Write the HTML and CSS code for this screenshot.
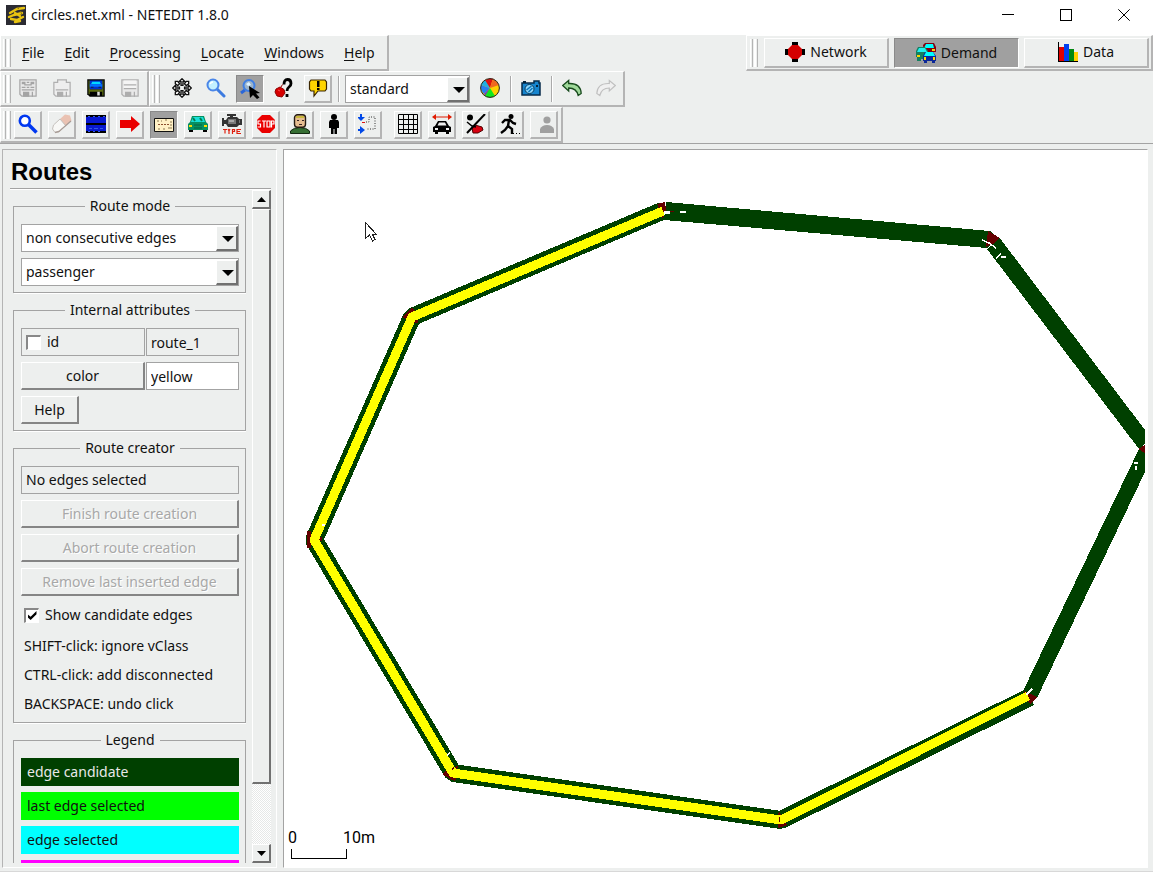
FILE: index.html
```
<!DOCTYPE html>
<html lang="en">
<head>
<meta charset="utf-8">
<title>circles.net.xml - NETEDIT 1.8.0</title>
<link rel="stylesheet" href="styles.css">
</head>
<body>
<header class="titlebar">
  <svg class="icon" viewBox="0 0 20 20"><rect width="20" height="20" fill="#2b2b33"/><path d="M4 8 L11 4 L18 3 M3 12 L8 10 L16 8 M5 14 L11 15 L17 12 M9 17 L14 16 M9 8 L14 11" stroke="#e8c410" stroke-width="2.4" fill="none" stroke-linecap="round"/><path d="M11 2.500 L13 4 M14 6 L16 9" stroke="#8a7208"/></svg>
  <span class="titlebar-text">circles.net.xml - NETEDIT 1.8.0</span>
  <div class="window-controls">
    <button class="window-btn" aria-label="Minimize"><svg viewBox="0 0 12 12"><path d="M0 5.500H12" stroke="#000"/></svg></button>
    <button class="window-btn" aria-label="Maximize"><svg viewBox="0 0 12 12"><rect x=".5" y=".5" width="11" height="11" fill="none" stroke="#000"/></svg></button>
    <button class="window-btn" aria-label="Close"><svg viewBox="0 0 12 12"><path d="M.3 .3L11.700 11.700M11.700 .3L.3 11.700" stroke="#000" fill="none"/></svg></button>
  </div>
</header>

<div class="bars">
  <div class="bar-row bar-row-split">
    <nav class="toolbar menubar">
      <span class="grip"></span>
      <button class="menu"><u>F</u>ile</button>
      <button class="menu"><u>E</u>dit</button>
      <button class="menu"><u>P</u>rocessing</button>
      <button class="menu"><u>L</u>ocate</button>
      <button class="menu"><u>W</u>indows</button>
      <button class="menu"><u>H</u>elp</button>
    </nav>
    <div class="toolbar modes">
      <span class="grip"></span>
      <button class="mode"><svg class="icon" viewBox="0 0 20 20"><path d="M7 0h6v20H7zM0 7h20v6H0z"/><path d="M7 3h6l4 4v6l-4 4H7l-4-4V7z" fill="#d40000"/></svg>Network</button>
      <button class="mode pressed"><svg class="icon" viewBox="0 0 20 20"><path d="M7 2l2-2h9l2 4v5H8z" fill="#800010"/><path d="M10 1h7l1 4H8z" fill="#0ff"/><path d="M2 4h7l3 4v8H5v2H1v-4H0V8z" fill="#148060"/><path d="M3 5h6l2 4H1z" fill="#20f0f0"/><path d="M9 9h8l3 4v5h-1v2h-3v-2h-5v2H8v-2H7v-5z" fill="#0c2898"/><path d="M10 9h7l2 4H8z" fill="#0ff"/><path d="M1 12h3v2H1zM8 14h2v3H8zM17 14h2v3h-2zM16 6h3v2h-3z" fill="#ffd800"/></svg>Demand</button>
      <button class="mode"><svg class="icon" viewBox="0 0 20 20"><path d="M0 0h1v19h19v1H0z"/><path d="M1 5h5v14H1z" fill="#e00000"/><path d="M6 2h5v17H6z" fill="#0040f0"/><path d="M11 7h5v12h-5z" fill="#008810"/><path d="M16 10h4v9h-4z" fill="#ffd000"/></svg>Data</button>
    </div>
  </div>

  <div class="bar-row">
    <div class="toolbar">
      <span class="grip"></span>
      <button class="tool flat" aria-label="Save network" disabled><svg class="icon" viewBox="0 0 16 16"><path d="M1.500 1.500h13v13H3l-1.500-1.500z" fill="#e8e8e8" stroke="#a8a8a8"/><path d="M3 3h3v2H3zM7 3h2v1H7zM10 3h3v2h-3zM5 5h6v1H5zM3 7h3v1H3zM7 7h2v1H7zM10 7h3v1h-3zM3 9h10v1H3zM4 11h5v4H4zM11 11h1v4h-1z" fill="#a4a4a4"/></svg></button>
      <button class="tool flat" aria-label="Save additionals" disabled><svg class="icon" viewBox="0 0 16 16"><path d="M1.500 3.500h3v-2h7v2h3v11H3l-1.500-1.500z" fill="#eee" stroke="#b0b0b0"/><path d="M3 9h10v1H3zM4 11h5v4H4zM11 11h1v4h-1z" fill="#adadad"/></svg></button>
      <button class="tool flat" aria-label="Save demand"><svg class="icon" viewBox="0 0 16 16"><path d="M1 1h14v14H3l-2-2z" fill="#000"/><path d="M2 2h1v11H2zM13 2h1v12h-1zM3 9h10v2H3z" fill="#5c6c10"/><path d="M3 2h10v7H3z" fill="#0030c8"/><path d="M5 3h6l1 2H4z" fill="#00d8ff"/><path d="M3 5h10v2H3z" fill="#0070ff"/><path d="M4 7h2v1H4zM10 7h2v1h-2z" fill="#102060"/><path d="M9 11h2v3H9z" fill="#ddd"/></svg></button>
      <button class="tool flat" aria-label="Save data" disabled><svg class="icon" viewBox="0 0 16 16"><path d="M1.500 1.500h13v13H3l-1.500-1.500z" fill="#e8e8e8" stroke="#b0b0b0"/><path d="M3 2h10v7H3z" fill="#f4f4f4"/><path d="M3 5h10v1H3zM3 8h10v1H3zM4 11h5v4H4zM11 11h1v4h-1z" fill="#adadad"/></svg></button>
    </div>
    <div class="toolbar view">
      <span class="grip"></span>
      <button class="tool flat" aria-label="Recenter view"><svg class="icon" viewBox="0 0 21 21"><g fill="#fff" stroke="#111" stroke-width="1.400"><path d="M10.500 .8l3 3h-2v4h-2v-4h-2zM10.500 20.200l3-3h-2v-4h-2v4h-2zM.8 10.500l3-3v2h4v2h-4v2zM20.200 10.500l-3-3v2h-4v2h4v2z"/><path d="M3.500 6V3.500H6L8 6 6 8zM17.500 6V3.500H15L13 6l2 2zM3.500 15v2.500H6L8 15l-2-2zM17.500 15v2.500H15L13 15l2-2z"/></g></svg></button>
      <button class="tool flat" aria-label="Zoom"><svg class="icon" viewBox="0 0 20 20"><path d="M11 11l7 7" stroke="#3d7be0" stroke-width="3" stroke-linecap="round"/><circle cx="7" cy="7" r="5.500" fill="#c4f0ff" stroke="#4a86e8" stroke-width="2"/><path d="M4 6q1-2 3-2" stroke="#fff" stroke-width="1.500" fill="none"/></svg></button>
      <button class="tool pressed" aria-label="Zoom style"><svg class="icon" viewBox="0 0 20 20"><path d="M5 11l-4 3" stroke="#2a66d8" stroke-width="3"/><circle cx="9" cy="6.500" r="5.500" fill="#9bb4cc" stroke="#3f7fe4" stroke-width="2"/><path d="M6 5l3-2 2 3-3 1z" fill="#dff3ff"/><path d="M9 7l11 7-4 .5 3.500 4-2.500 1.500-4-4-3 3z" fill="#000"/></svg></button>
      <button class="tool flat" aria-label="Object help"><svg class="icon" viewBox="0 0 20 20"><path d="M10 6.500q0-5 3.500-5t3.500 4q0 2-2 3.500t-2 4M13 16v3" stroke="#000" stroke-width="2.800" fill="none"/><path d="M7 9l1.500-2.500M2 11l4-2 4 2.500 1 3.500-3 4-5-1-2-4z" fill="#d80000" stroke="#900000"/><path d="M4 12l2 1" stroke="#ff5050"/></svg></button>
      <button class="tool" aria-label="Messages"><svg class="icon" viewBox="0 0 20 20"><path d="M3 2h14l1.500 2v7L17 13h-7l-4 5v-5H3l-1.500-2V4z" fill="#ffd500" stroke="#3b2600" stroke-width="1.200"/><path d="M9 3h2.500v6H9zM9 10h2.500v2H9z" fill="#000"/></svg></button>
      <span class="divider"></span>
      <span class="combo combo-view"><select aria-label="Coloring scheme"><option>standard</option></select></span>
      <button class="tool flat" aria-label="Edit coloring"><svg class="icon" viewBox="0 0 20 20"><circle cx="10" cy="10" r="9.500" fill="#ffd000"/><path d="M10 10L4 3Q7 .5 10 .5H13z" fill="#e01010"/><path d="M10 10L13 .8Q17 3 19 7z" fill="#f06820"/><path d="M10 10L1 7Q2 4 5 2z" fill="#20b0e0"/><path d="M10 10L1 7Q0 12 4 16z" fill="#2880f0"/><path d="M10 10L4 16l2 2z" fill="#8030c0"/><path d="M10 10L5 18Q10 21 15 18Z" fill="#10e820"/><circle cx="10" cy="10" r="9.400" fill="none" stroke="#222"/></svg></button>
      <span class="divider"></span>
      <button class="tool flat" aria-label="Make snapshot"><svg class="icon" viewBox="0 0 20 20"><path d="M1 5h12V3h5v2h1v12H1z" fill="#1685cf" stroke="#062b4b" stroke-width="1.500"/><path d="M2 3h3v2H2zM15 7h2v2h-2z" fill="#04243c"/><circle cx="8.500" cy="11" r="4.500" fill="#8ed8ff" stroke="#05395c"/><path d="M5.500 12l5-4M7.500 14l4-4" stroke="#0874b8" stroke-width="1.500"/></svg></button>
      <span class="divider"></span>
      <button class="tool flat" aria-label="Undo"><svg class="icon" viewBox="0 0 20 20"><path d="M.7 7.500l6-5v3q12-.5 12.500 10l-3 2Q14.500 10 6.700 10v3z" fill="#9fd89a" stroke="#174a1c" stroke-width="1.300"/></svg></button>
      <button class="tool flat" aria-label="Redo" disabled><svg class="icon" viewBox="0 0 20 20"><path d="M19.300 7.500l-6-5v3Q1.300 5 .8 15.500l3 2Q5.500 10 13.300 10v3z" fill="#f0f0f0" stroke="#c0c0c0" stroke-width="1.200"/></svg></button>
    </div>
  </div>

  <div class="bar-row">
    <div class="toolbar edit">
      <span class="grip"></span>
      <button class="tool" aria-label="Inspect"><svg class="icon" viewBox="0 0 20 20"><path d="M10.500 10.500l8 8" stroke="#0037f0" stroke-width="3.600"/><circle cx="6.800" cy="6.800" r="5" fill="#fff" stroke="#0037f0" stroke-width="2.600"/></svg></button>
      <button class="tool" aria-label="Delete"><svg class="icon" viewBox="0 0 20 20"><path d="M8 5l5-4.500 5 1 1.500 5L13 12z" fill="#eac2b2"/><path d="M8 5l5.500 6.500L7 18l-4 .5L.5 15l1-4z" fill="#f8f8f6" stroke="#c4c0bc"/><path d="M3 18.500l4-1 12-10.500" stroke="#a89c96" stroke-width="1.300" fill="none"/></svg></button>
      <button class="tool" aria-label="Select"><svg class="icon" viewBox="0 0 20 20"><path d="M0 1h20v18H0z" fill="#0818d0"/><path d="M0 1h20v2H0zM0 9h20v2H0zM0 17h20v2H0z"/><path d="M2 2h2v1H2zM7 2h2v1H7zM12 2h2v1h-2zM17 2h2v1h-2zM3 14h3v1H3zM8 14h4v1H8zM14 14h3v1h-3zM2 17h2v1H2zM7 17h2v1H7zM12 17h2v1h-2z" fill="#3058e8"/></svg></button>
      <button class="tool" aria-label="Move"><svg class="icon" viewBox="0 0 20 20"><path d="M0 6h11V2l9 8-9 8v-4H0z" fill="#ea0000"/></svg></button>
      <button class="tool pressed" aria-label="Routes"><svg class="icon" viewBox="0 0 20 20"><path d="M.5 3.500h19v13H.5z" fill="#fff1c6" stroke="#111"/><path d="M3 6h2M7 6h1M11 5h2M4 14h2M9 14h3M14 13h2M17 6v8" stroke="#8b7650" stroke-dasharray="2 1"/><path d="M4 9.500h12" stroke="#8b5030" stroke-dasharray="2 1"/></svg></button>
      <button class="tool" aria-label="Vehicles"><svg class="icon" viewBox="0 0 20 20"><path d="M4 2h12l2 6 2 2v6h-1v2h-4v-2H5v2H1v-2H0v-6l2-2z" fill="#079060"/><path d="M5 3h10l2 5H3z" fill="#18e0d8"/><path d="M5 4l2 3M12 4l2 3" stroke="#067c50" stroke-width="2"/><path d="M1 11h3v2H1zM16 11h3v2h-3z" fill="#ffe000"/><path d="M6 11h8M6 14h8" stroke="#056040"/><path d="M1 16h4v2H1zM15 16h4v2h-4z"/></svg></button>
      <button class="tool" aria-label="Vehicle types"><svg class="icon" viewBox="0 0 20 20"><path d="M5 0h9v2h-3v1h4l2 2h3v6h-3l-2 2H6L4 10H2v2H0V4h2v2h2l2-3h2V2H5z" fill="#333"/><path d="M6 5h8v5H6zM17 6h1v3h-1z" fill="#777"/><path d="M7 7h5" stroke="#ddd"/><path d="M1 15.500h4M3 15.500v4M6 15l1 2 1-2M7 17v3M10.500 20v-4.500h2v2h-2M19 15.500h-4v4h4M15 17.500h3" stroke="#e02010" stroke-width="1.200" fill="none"/></svg></button>
      <button class="tool" aria-label="Stops"><svg class="icon" viewBox="0 0 20 20"><path d="M6 1h8l5 5v8l-5 5H6l-5-5V6z" fill="#ea0000"/><path d="M4.500 7H2v3h2.500v3H1.500M6 7h4M8 7v6.500M11 7h3v6h-3zM15.500 13.500V7H18v3h-2" stroke="#fff" stroke-width="1.200" fill="none"/></svg></button>
      <button class="tool" aria-label="Person types"><svg class="icon" viewBox="0 0 20 20"><path d="M.5 19.500V17q3-3.500 9.500-3.500t9.500 3.500v2.500z" fill="#356d32" stroke="#122810"/><rect x="4.500" y=".8" width="11" height="12.500" rx="3" fill="#e6bd91" stroke="#251b12" stroke-width="1.400"/><path d="M6 2h8v2H6z" fill="#c9b83c"/><path d="M7 6h2v1H7zM12 6h2v1h-2zM9 10h3v1H9z" fill="#322"/></svg></button>
      <button class="tool" aria-label="Persons"><svg class="icon" viewBox="0 0 20 20"><circle cx="10" cy="3" r="3"/><path d="M6 6h8l1 2v6h-2v6h-2.500v-5h-1v5H7v-6H5V8z"/></svg></button>
      <button class="tool" aria-label="Person plans"><svg class="icon" viewBox="0 0 20 20"><path d="M2 0h2v3h3L3 7-1 3h3zM0 15h2v-3l5 4-5 4v-3H0z" fill="#0048e8"/><path d="M8 8h3V3h6v12H8" stroke="#333" stroke-dasharray="1 1.500" fill="none"/><path d="M4 8.500h3" stroke="#d11"/></svg></button>
      <span class="toolbar-space"></span>
      <button class="tool" aria-label="Grid"><svg class="icon" viewBox="0 0 20 20"><path d="M.5.5h19v19H.5zM5.500 0v20M10.500 0v20M15.500 0v20M0 5.500h20M0 10.500h20M0 15.500h20" fill="none" stroke="#000"/></svg></button>
      <button class="tool" aria-label="Draw spread vehicles"><svg class="icon" viewBox="0 0 20 20"><path d="M0 3L4 0v2.500h12V0l4 3-4 3V3.500H4V6z" fill="#e01a00"/><path d="M6 7h8l3 5 2 1v5h-2v2h-3v-2H6v2H3v-2H1v-5l2-1z"/><path d="M7 8.500h6l1.500 3h-9zM3 14h3v2H3zM14 14h3v2h-3z" fill="#eee"/></svg></button>
      <button class="tool" aria-label="Hide shapes"><svg class="icon" viewBox="0 0 20 20"><circle cx="4" cy="3.500" r="3"/><path d="M6 14l3-3 7 2 1 3-5 3H7z" fill="#d80010" stroke="#500000"/><path d="M19 0L1 19" stroke="#000" stroke-width="2"/><path d="M1 8l5 4 4 1" fill="none" stroke="#000" stroke-width="1.500"/></svg></button>
      <button class="tool" aria-label="Show person plans"><svg class="icon" viewBox="0 0 20 20"><circle cx="11" cy="2.500" r="2.500"/><path d="M2 9l3-3h5l3 3 3 1M9 6l-1 6 4 3v5M8 12l-3 4-4 3" stroke="#000" stroke-width="2.400" fill="none"/><path d="M13 19.500h7" stroke="#000" stroke-dasharray="1 2"/></svg></button>
      <button class="tool" aria-label="Lock person" disabled><svg class="icon" viewBox="0 0 20 20"><circle cx="13" cy="6" r="3.600" fill="#a0a0a0"/><path d="M6 19v-4q2-4 7-4t7 4v4z" fill="#a0a0a0"/></svg></button>
    </div>
  </div>
</div>

<main class="workspace">
  <aside class="sidebar">
    <h1>Routes</h1>
    <div class="sidebar-body">
      <div class="groups">
        <fieldset>
          <legend>Route mode</legend>
          <span class="combo"><select aria-label="Route mode"><option>non consecutive edges</option></select></span>
          <span class="combo"><select aria-label="Vehicle class"><option>passenger</option></select></span>
        </fieldset>
        <fieldset>
          <legend>Internal attributes</legend>
          <div class="attribute">
            <label class="box"><input type="checkbox" class="check">id</label>
            <input class="box" type="text" value="route_1" aria-label="id value" readonly>
          </div>
          <div class="attribute">
            <button class="button">color</button>
            <input class="box editable" type="text" value="yellow" aria-label="color value">
          </div>
          <button class="button button-small">Help</button>
        </fieldset>
        <fieldset>
          <legend>Route creator</legend>
          <div class="box">No edges selected</div>
          <button class="button" disabled>Finish route creation</button>
          <button class="button" disabled>Abort route creation</button>
          <button class="button" disabled>Remove last inserted edge</button>
          <label class="check-row"><input type="checkbox" class="check" checked>Show candidate edges</label>
          <div class="hints">
            <p>SHIFT-click: ignore vClass</p>
            <p>CTRL-click: add disconnected</p>
            <p>BACKSPACE: undo click</p>
          </div>
        </fieldset>
        <fieldset>
          <legend>Legend</legend>
          <div class="swatch candidate">edge candidate</div>
          <div class="swatch last">last edge selected</div>
          <div class="swatch selected">edge selected</div>
          <div class="swatch conflict"></div>
        </fieldset>
      </div>
      <div class="scrollbar">
        <button class="scroll-btn" aria-label="Scroll up"><svg viewBox="0 0 9 5"><path d="M0 5L4.500 0 9 5z"/></svg></button>
        <div class="thumb"></div>
        <div class="trough"></div>
        <button class="scroll-btn" aria-label="Scroll down"><svg viewBox="0 0 9 5"><path d="M0 0h9L4.500 5z"/></svg></button>
      </div>
    </div>
  </aside>

  <section class="canvas">
    <svg class="network" viewBox="284 150 863 710" preserveAspectRatio="xMinYMin meet">
      <g fill="#004000">
        <path d="M666 202L990 231 999 238 987 248 664 220z"/>
        <path d="M999 237L1145 430V444L1139 449 987 249z"/>
        <path d="M1139 449L1145 452V472L1037 698 1023 691z"/>
      </g>
      <path d="M662 211L412 317 314 540 453 773 781 820 1030 697" fill="none" stroke="#004000" stroke-width="18" stroke-linejoin="bevel"/>
      <g fill="#640000">
        <path d="M657 204L665 202 666 210 663 219 660 212z"/>
        <path d="M988 231L1000 238 993 244 986 247z"/>
        <path d="M1138 449L1145 445V453z"/>
        <path d="M1024 691L1037 697 1030 704 1026 699z"/>
        <path d="M402 317L412 307 416 312 406 319z"/>
        <path d="M307 531h4v17h-4zM317 537h5v4h-5z"/>
        <path d="M442 774L446 771 457 776 455 781 450 779zM454 767L458 766 457 770z"/>
        <path d="M778 822H786L787 825 778 828zM779 811L782 816H778z"/>
        <path d="M414 320h4v3h-4z"/>
      </g>
      <path d="M663 211L412 317 314 540 453 773 781 820 1028 696" fill="none" stroke="#ffff00" stroke-width="9" stroke-linejoin="round"/>
      <g stroke="#fff" fill="none" stroke-width="1.500">
        <path d="M664 211.500h10M680 212h6M664 213h6M982 240l7 3 7 5M996 258l5-4M1001 257h5M1134 463h4M1136 466v4M1026 695l6-6M322 525h3M447 755l3-2"/>
      </g>
      <path d="M670 211.500h4M452 770l2-3M779 817v5" stroke="#640000"/>
      <path d="M365.500 222.500V238.500L369.500 235 372.500 241 375 239.500 372.500 234.500H376.500z" fill="#fff" stroke="#222"/>
      <path d="M291.500 849v9.500h55V849" fill="none" stroke="#000"/>
      <text x="288" y="843">0</text>
      <text x="343" y="843">10m</text>
    </svg>
  </section>
</main>
</body>
</html>
```
FILE: styles.css
```
* { box-sizing: border-box; }

:root {
  --face: #edefee;
  --shade: #a3a3a3;
  --dark: #707070;
  --pressed: #a0a0a0;
}

body {
  margin: 0;
  height: 100vh;
  display: flex;
  flex-direction: column;
  overflow: hidden;
  background: var(--face);
  color: #111;
  font: 14px/20px "Noto Sans", "Open Sans", sans-serif;
}

button, input, select {
  font: inherit;
  color: inherit;
  margin: 0;
  padding: 0;
  border: 0;
  border-radius: 0;
  background: none;
}

svg { display: block; }
.icon { width: 20px; height: 20px; flex: none; }

/* title bar */
.titlebar {
  flex: none;
  display: flex;
  align-items: center;
  height: 35px;
  padding: 0 0 6px 6px;
  background: #fff;
}
.titlebar-text { margin-left: 5px; }
.window-controls { display: flex; margin-left: auto; }
.window-btn {
  display: grid;
  place-items: center;
  width: 58px;
  height: 29px;
}
.window-btn svg { width: 12px; height: 12px; }

/* tool bars */
.bars { flex: none; border-bottom: 1px solid var(--shade); }
.bar-row { display: flex; height: 36px; }
.bar-row-split { justify-content: space-between; }
.toolbar {
  display: flex;
  align-items: center;
  padding: 0 3px 0 2px;
  border: 1px solid #fff;
  border-right: 2px solid #b4b4b4;
  border-bottom: 2px solid #b4b4b4;
}
.grip {
  flex: none;
  width: 8px;
  height: 28px;
  margin-right: 3px;
  border: solid #b4b4b4;
  border-width: 0 1px;
  background: linear-gradient(90deg, transparent 1px, #b4b4b4 1px, #b4b4b4 2px, transparent 2px, transparent 3px, #fff 3px, #fff 5px, transparent 5px);
  border-left-color: #fff;
}
.view .grip { margin-right: 8px; }
.menubar { padding-right: 0; }
.menu { padding: 0 8px; margin-right: 4px; text-align: left; }
.menu u { text-decoration: underline 1px #111; text-underline-offset: 2px; text-decoration-skip-ink: none; }

.mode {
  display: flex;
  align-items: center;
  justify-content: center;
  gap: 5px;
  width: 125px;
  height: 30px;
  margin-right: 5px;
  border: 1px solid #fff;
  border-right: 2px solid #b4b4b4;
  border-bottom: 2px solid #b4b4b4;
}
.modes { padding: 0 0 0 3px; }
.modes .grip { margin-right: 6px; }
.modes .mode:last-child { margin-right: 2px; }

.tool {
  flex: none;
  display: grid;
  place-items: center;
  width: 28px;
  height: 28px;
  margin-right: 6px;
  border: 1px solid #fff;
  border-right: 2px solid #b4b4b4;
  border-bottom: 2px solid #b4b4b4;
}
.tool.flat { border-color: transparent; }
.pressed {
  background: var(--pressed);
  border: 1px solid #fff;
  border-top-color: #8a8a8a;
  border-left-color: #8a8a8a;
}
.toolbar > .tool:last-child { margin-right: 0; }
.toolbar-space { width: 6px; }
.divider {
  width: 2px;
  height: 26px;
  margin: 0 5px 0 0;
  border-left: 1px solid #aaa;
  border-right: 1px solid #fff;
}

/* combo boxes */
.combo {
  position: relative;
  display: flex;
  height: 28px;
  border: 1px solid var(--shade);
  background: #fff;
}
.combo select {
  flex: 1;
  min-width: 0;
  padding: 0 24px 0 4px;
  appearance: none;
}
.combo::after {
  content: "";
  position: absolute;
  top: 1px;
  right: 0;
  bottom: 0;
  width: 19px;
  border: 1px solid #fff;
  border-right: 2px solid var(--dark);
  border-bottom: 2px solid var(--dark);
  background: linear-gradient(var(--face), var(--face));
  pointer-events: none;
}
.combo::before {
  content: "";
  position: absolute;
  z-index: 1;
  top: 11px;
  right: 4px;
  border: solid transparent;
  border-width: 6px 6px 0;
  border-top-color: #000;
  pointer-events: none;
}
.combo-view { width: 125px; margin-right: 6px; }

/* workspace */
.workspace {
  flex: 1;
  min-height: 0;
  display: flex;
  gap: 6px;
  padding: 5px 5px 3px 2px;
  border-bottom: 1px solid #d8d8d8;
}
.sidebar {
  flex: none;
  display: flex;
  flex-direction: column;
  width: 275px;
  padding: 0 5px 4px 7px;
  border: 1px solid #b4b4b4;
  border-right-color: #fff;
  border-bottom-color: #fff;
}
h1 {
  flex: none;
  margin: 0 0 1px;
  padding: 4px 1px 0;
  height: 39px;
  border-bottom: 1px solid var(--shade);
  box-shadow: 0 1px 0 #fff;
  color: #000;
  font: bold 24px/36px "Liberation Sans", sans-serif;
}
.sidebar-body {
  flex: 1;
  min-height: 0;
  display: flex;
  gap: 6px;
}
.groups {
  flex: 1;
  min-width: 0;
  display: flex;
  flex-direction: column;
  gap: 7px;
  padding: 6px 0 0 3px;
  overflow: hidden;
}
fieldset {
  flex: none;
  display: flex;
  flex-direction: column;
  gap: 6px;
  min-width: 0;
  margin: 0;
  padding: 8px 6px 6px 7px;
  border: 1px solid var(--shade);
  box-shadow: 1px 1px 0 #fff;
}
legend {
  margin: 0 auto;
  padding: 0 5px;
  background: var(--face);
}
.attribute { display: grid; grid-template-columns: 124px 1fr; gap: 1px; }
.box {
  display: flex;
  align-items: center;
  width: 100%;
  min-width: 0;
  height: 28px;
  padding: 0 4px;
  border: 1px solid var(--shade);
}
.editable { background: #fff; }
.button {
  height: 28px;
  border: 1px solid #fff;
  border-right: 2px solid #858585;
  border-bottom: 2px solid #858585;
}
.button:disabled { color: #a8a8a8; text-shadow: 1px 1px 0 #fff; }
.button-small { align-self: flex-start; width: 58px; }

.check {
  flex: none;
  appearance: none;
  display: grid;
  place-items: center;
  width: 15px;
  height: 15px;
  margin-right: 6px;
  border: 1px solid #fff;
  border-top: 2px solid #888;
  border-left: 2px solid #888;
  background: #fff;
}
.check:checked::before {
  content: "";
  width: 9px;
  height: 9px;
  background: #000;
  clip-path: polygon(0 35%, 35% 65%, 100% 0, 100% 35%, 35% 100%, 0 70%);
}
.check-row { display: flex; align-items: center; height: 26px; padding-left: 3px; }
.hints { display: grid; gap: 5px; padding-left: 3px; }
.hints p { margin: 0; line-height: 24px; white-space: nowrap; }

.swatch { height: 28px; padding: 0 6px; line-height: 28px; }
.candidate { background: #004000; color: #e8e8e8; }
.last { background: #00ff00; }
.selected { background: #00ffff; }
.conflict { background: #ff00ff; }

.scrollbar {
  flex: none;
  display: flex;
  flex-direction: column;
  width: 19px;
}
.scroll-btn, .thumb {
  border: 1px solid #fff;
  border-right: 2px solid var(--dark);
  border-bottom: 2px solid var(--dark);
}
.scroll-btn {
  flex: none;
  display: grid;
  place-items: center;
  height: 19px;
}
.scroll-btn svg { width: 9px; height: 5px; }
.thumb { flex: 575; }
.trough { flex: 60; background: repeating-conic-gradient(#fff 0 25%, #e6e8e7 0 50%) 0 0 / 2px 2px; }

.canvas {
  flex: 1;
  min-width: 0;
  border: 1px solid var(--shade);
  border-right-color: #fff;
  border-bottom-color: #fff;
  background: #fff;
}
.network { width: 100%; height: 100%; }
.network path { shape-rendering: crispEdges; }
.network text { font: 16px Roboto, sans-serif; fill: #000; }
```
